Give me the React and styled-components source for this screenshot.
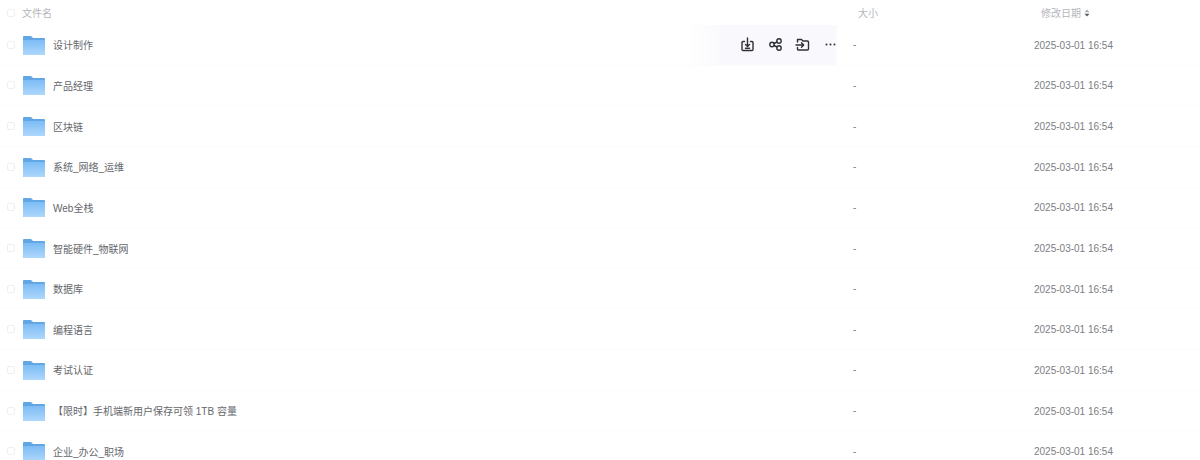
import React from "react";
import styled, { createGlobalStyle } from "styled-components";

const GlobalStyle = createGlobalStyle`
  html, body {
    margin: 0;
    padding: 0;
    background: #fff;
    overflow: hidden;
  }
  body {
    font-family: "Liberation Sans", "Noto Sans CJK SC", sans-serif;
  }
`;

const Page = styled.div`
  width: 1200px;
  height: 460px;
  overflow: hidden;
`;

const HeadRow = styled.div`
  display: grid;
  grid-template-columns: 858px 176px 1fr;
  height: 25px;
  align-items: center;
  font-size: 10px;
  color: #b4b6ba;
`;

const NameHead = styled.div`
  display: flex;
  align-items: center;
  gap: 7px;
  padding-left: 7px;
`;

const Check = styled.span`
  display: block;
  width: 8px;
  height: 8px;
  border: 1px solid #eeeff1;
  border-radius: 2px;
  box-sizing: border-box;
  flex: none;
`;

const DateHead = styled.div`
  display: flex;
  align-items: center;
  gap: 3px;
  padding-left: 7px;
`;

const Row = styled.div`
  display: grid;
  grid-template-columns: 837px 16px 181px 1fr;
  height: 40.65px;
  align-items: center;
  box-sizing: border-box;
  border-bottom: 1px solid #fbfbfc;
  font-size: 10px;
  color: #65676c;
`;

const NameCell = styled.div`
  position: relative;
  height: 100%;
  display: flex;
  align-items: center;
  padding-left: 7px;
`;

const FolderBox = styled.span`
  display: block;
  width: 22px;
  height: 20px;
  margin-left: 8px;
  margin-right: 8px;
  flex: none;
`;

const Actions = styled.div`
  position: absolute;
  top: 0;
  right: 0;
  width: 150px;
  height: 100%;
  display: flex;
  align-items: center;
  justify-content: flex-end;
  gap: 10.7px;
  padding-right: 0;
  box-sizing: border-box;
  background: linear-gradient(90deg, #fff 0%, #f8f8fd 30%, #f8f8fd 94%, #fbfbfe 100%);
  color: #2f3137;
`;

const ActionIcon = styled.svg`
  width: 17px;
  height: 17px;
  display: block;

  &:last-child {
    margin-right: -2px;
  }
`;

const Dash = styled.div`
  grid-column: 3 / 4;
  color: #7a7c82;
`;

const DateCell = styled.div`
  padding-top: 1px;
  color: #7c7e83;
`;

const folders = [
  "设计制作",
  "产品经理",
  "区块链",
  "系统_网络_运维",
  "Web全栈",
  "智能硬件_物联网",
  "数据库",
  "编程语言",
  "考试认证",
  "【限时】手机端新用户保存可领 1TB 容量",
  "企业_办公_职场",
];

function Folder({ id }) {
  return (
    <FolderBox>
      <svg width="22" height="20" viewBox="0 0 22 20">
        <defs>
          <linearGradient id={id} x1="0" y1="0" x2="0" y2="1">
            <stop offset="0" stopColor="#7cbcf5" />
            <stop offset="1" stopColor="#aed7fc" />
          </linearGradient>
        </defs>
        <path d="M0 2a1 1 0 0 1 1-1h7l2 2h11a1 1 0 0 1 1 1v15a1 1 0 0 1-1 1H1a1 1 0 0 1-1-1z" fill="#62a6e4" />
        <path d="M0 5h22v14a1 1 0 0 1-1 1H1a1 1 0 0 1-1-1z" fill={`url(#${id})`} />
      </svg>
    </FolderBox>
  );
}

function HoverActions() {
  const line = { fill: "none", stroke: "currentColor", strokeWidth: 1.4, strokeLinecap: "round", strokeLinejoin: "round" };
  return (
    <Actions>
      <ActionIcon viewBox="0 0 17 17" {...line}>
        <path d="M5.5 5.5H4a1 1 0 0 0-1 1v7a1 1 0 0 0 1 1h9a1 1 0 0 0 1-1v-7a1 1 0 0 0-1-1h-1.500" />
        <path d="M8.500 2v8.500M6.500 8.500l2 2 2-2" />
        <path d="M6.500 12.300h4" />
      </ActionIcon>
      <ActionIcon viewBox="0 0 17 17" {...line}>
        <circle cx="5" cy="8.500" r="2.200" />
        <circle cx="12" cy="5" r="2.200" />
        <circle cx="12" cy="12" r="2.200" />
        <path d="M7 7.500l3-1.500M7 9.500l3 1.500" />
      </ActionIcon>
      <ActionIcon viewBox="0 0 17 17" {...line}>
        <path d="M3.500 6V3.500h4l1.500 1.500h4.500a1 1 0 0 1 1 1v7a1 1 0 0 1-1 1H4.500a1 1 0 0 1-1-1v-1.500" />
        <path d="M2 9h7.500M7.500 6.800L9.700 9l-2.200 2.200" />
      </ActionIcon>
      <ActionIcon viewBox="0 0 17 17">
        <circle cx="4.500" cy="8.500" r="1" fill="currentColor" />
        <circle cx="8.500" cy="8.500" r="1" fill="currentColor" />
        <circle cx="12.500" cy="8.500" r="1" fill="currentColor" />
      </ActionIcon>
    </Actions>
  );
}

function SortArrows() {
  return (
    <svg width="6" height="8" viewBox="0 0 6 8">
      <path d="M3 0.500L5.500 3.200H0.500z" fill="#a9abb0" />
      <path d="M3 7.500L0.500 4.800H5.500z" fill="#55575c" />
    </svg>
  );
}

export default function App() {
  return (
    <Page>
      <GlobalStyle />
      <HeadRow>
        <NameHead>
          <Check />
          文件名
        </NameHead>
        <div>大小</div>
        <DateHead>
          修改日期
          <SortArrows />
        </DateHead>
      </HeadRow>
      {folders.map((name, i) => (
        <Row key={name}>
          <NameCell>
            <Check />
            <Folder id={`folder-grad-${i}`} />
            {name}
            {i === 0 && <HoverActions />}
          </NameCell>
          <Dash>-</Dash>
          <DateCell>2025-03-01 16:54</DateCell>
        </Row>
      ))}
    </Page>
  );
}
